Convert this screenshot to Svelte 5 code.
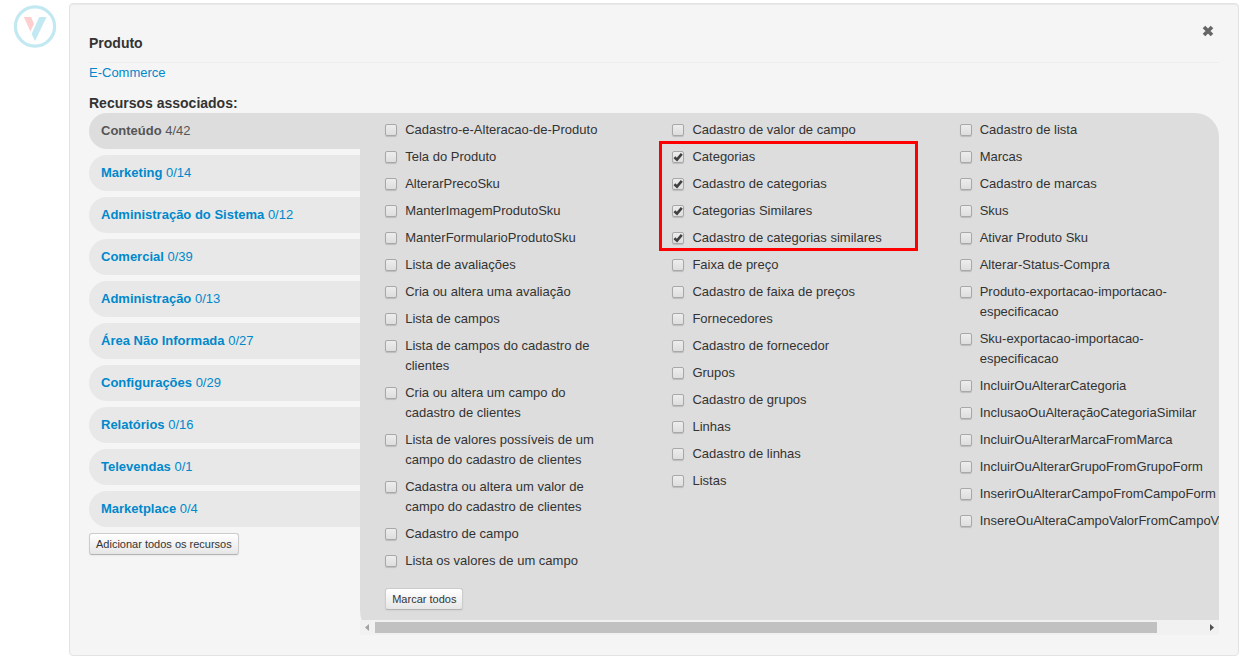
<script>
  const tabs = [
    ['Conteúdo', '4/42'],
    ['Marketing', '0/14'],
    ['Administração do Sistema', '0/12'],
    ['Comercial', '0/39'],
    ['Administração', '0/13'],
    ['Área Não Informada', '0/27'],
    ['Configurações', '0/29'],
    ['Relatórios', '0/16'],
    ['Televendas', '0/1'],
    ['Marketplace', '0/4'],
  ];

  // Each column is a list of groups, so that a run of resources can be outlined together.
  let columns = $state([
    [
      {
        items: [
          'Cadastro-e-Alteracao-de-Produto',
          'Tela do Produto',
          'AlterarPrecoSku',
          'ManterImagemProdutoSku',
          'ManterFormularioProdutoSku',
          'Lista de avaliações',
          'Cria ou altera uma avaliação',
          'Lista de campos',
          'Lista de campos do cadastro de clientes',
          'Cria ou altera um campo do cadastro de clientes',
          'Lista de valores possíveis de um campo do cadastro de clientes',
          'Cadastra ou altera um valor de campo do cadastro de clientes',
          'Cadastro de campo',
          'Lista os valores de um campo',
        ].map((name) => ({ name, checked: false })),
      },
    ],
    [
      { items: [{ name: 'Cadastro de valor de campo', checked: false }] },
      {
        marked: true,
        items: [
          'Categorias',
          'Cadastro de categorias',
          'Categorias Similares',
          'Cadastro de categorias similares',
        ].map((name) => ({ name, checked: true })),
      },
      {
        items: [
          'Faixa de preço',
          'Cadastro de faixa de preços',
          'Fornecedores',
          'Cadastro de fornecedor',
          'Grupos',
          'Cadastro de grupos',
          'Linhas',
          'Cadastro de linhas',
          'Listas',
        ].map((name) => ({ name, checked: false })),
      },
    ],
    [
      {
        items: [
          'Cadastro de lista',
          'Marcas',
          'Cadastro de marcas',
          'Skus',
          'Ativar Produto Sku',
          'Alterar-Status-Compra',
          'Produto-exportacao-importacao-especificacao',
          'Sku-exportacao-importacao-especificacao',
          'IncluirOuAlterarCategoria',
          'InclusaoOuAlteraçãoCategoriaSimilar',
          'IncluirOuAlterarMarcaFromMarca',
          'IncluirOuAlterarGrupoFromGrupoForm',
          'InserirOuAlterarCampoFromCampoForm',
          'InsereOuAlteraCampoValorFromCampoValorForm',
        ].map((name) => ({ name, checked: false })),
      },
    ],
  ]);

  let scroller;

  function scroll(step) {
    scroller.scrollLeft += step;
  }

  function checkAll() {
    for (const column of columns)
      for (const group of column)
        for (const item of group.items) item.checked = true;
  }
</script>

<div class="page">
  <svg class="logo" viewBox="0 0 44 44" aria-hidden="true">
    <circle cx="22" cy="21.5" r="19.6" fill="none" stroke="#c2e9f2" stroke-width="3.2" />
    <path d="M10.8 12h7.4l2.8 7-3.6 7.4z" fill="#ffcfcf" />
    <path d="M26.2 12h7.4L22 36l-3.4-7z" fill="#c2e9f2" />
  </svg>

  <main class="card">
    <header>
      <h1>Produto</h1>
      <button class="close" aria-label="Fechar">
        <svg viewBox="0 0 12 12" aria-hidden="true">
          <path d="M2 2l8 8M10 2l-8 8" stroke="#666" stroke-width="3.6" />
        </svg>
      </button>
    </header>

    <a class="crumb" href="#ecommerce">E-Commerce</a>
    <h2>Recursos associados:</h2>

    <div class="resources">
      <div class="side">
        <nav>
          {#each tabs as [name, count], i}
            <a href="#tab{i}" class:active={i === 0}><strong>{name}</strong> {count}</a>
          {/each}
        </nav>
        <button class="btn">Adicionar todos os recursos</button>
      </div>

      <section class="panel">
        <div class="scroller" bind:this={scroller}>
          <div class="columns">
            {#each columns as column}
              <div class="column">
                {#each column as group}
                  <div class="group" class:marked={group.marked}>
                    {#each group.items as item}
                      <label>
                        <input type="checkbox" bind:checked={item.checked} />
                        <span>{item.name}</span>
                      </label>
                    {/each}
                  </div>
                {/each}
              </div>
            {/each}
          </div>
          <button class="btn" onclick={checkAll}>Marcar todos</button>
        </div>
        <div class="scrollbar">
          <button aria-label="Rolar para a esquerda" onclick={() => scroll(-40)}>
            <svg viewBox="0 0 15 15"><path d="M9 4v7L5 7.5z" fill="#a3a3a3" /></svg>
          </button>
          <div class="track"><div class="thumb"></div></div>
          <button aria-label="Rolar para a direita" onclick={() => scroll(40)}>
            <svg viewBox="0 0 15 15"><path d="M6 4v7l4-3.5z" fill="#505050" /></svg>
          </button>
        </div>
      </section>
    </div>
  </main>
</div>

<style>
  :global(body) {
    background: #fff;
    color: #333;
    font: 13px/20px "Liberation Sans", Arial, sans-serif;
  }

  .page {
    display: flex;
    align-items: flex-start;
    gap: 12px;
    padding: 3px 13px 10px;
  }

  .logo {
    flex: none;
    width: 44px;
    height: 44px;
    margin-top: 2px;
  }

  .card {
    flex: 1;
    min-width: 0;
    padding: 19px;
    padding-bottom: 20px;
    border: 1px solid #e3e3e3;
    border-radius: 4px;
    background: #f5f5f5;
    box-shadow: inset 0 1px 1px rgba(0, 0, 0, 0.05);
  }

  header {
    display: flex;
    justify-content: space-between;
    align-items: flex-start;
    border-bottom: 1px solid #eee;
  }

  h1,
  h2 {
    margin: 0;
    font-size: 14px;
    line-height: 20px;
  }

  h1 {
    padding: 10px 0 9px;
  }

  h2 {
    margin-top: 10px;
  }

  a {
    color: #08c;
    text-decoration: none;
  }

  .crumb {
    display: block;
  }

  .close {
    display: flex;
    margin: 2px 5px 0 0;
    padding: 0;
    border: 0;
    background: none;
  }

  .close svg {
    width: 12px;
    height: 12px;
  }

  .resources {
    display: flex;
  }

  .side {
    flex: 0 0 24%;
    min-width: 0;
  }

  nav {
    display: flex;
    flex-direction: column;
    gap: 6px;
    margin-bottom: 6px;
  }

  nav a {
    padding: 8px 12px;
    border-radius: 18px 0 0 18px;
    background: #e8e8e8;
  }

  nav a.active {
    background: #ddd;
    color: #555;
  }

  .btn {
    padding: 0 6px;
    border: 1px solid #ccc;
    border-bottom-color: #b3b3b3;
    border-radius: 3px;
    background: linear-gradient(#fff, #e6e6e6);
    box-shadow: 0 1px 2px rgba(0, 0, 0, 0.05);
    color: #333;
    font: 11px/20px "Liberation Sans", Arial, sans-serif;
  }

  .panel {
    flex: 1;
    min-width: 0;
    border-radius: 0 24px 0 24px;
    background: #ddd;
  }

  .scroller {
    overflow: hidden;
    padding: 7px 0 10px 25px;
  }

  .columns {
    display: grid;
    grid-template-columns: repeat(3, 34.45%);
    margin-bottom: 10px;
  }

  .group {
    position: relative;
    width: 220px;
  }

  .marked::after {
    content: "";
    position: absolute;
    inset: -6px -26px 4px -13px;
    border: 3px solid #f00;
    pointer-events: none;
  }

  label {
    display: flex;
    align-items: flex-start;
    gap: 8px;
    padding-bottom: 7px;
  }

  input {
    appearance: none;
    flex: none;
    width: 12px;
    height: 12px;
    margin: 4px 0 0;
    border: 1px solid #a8a8a8;
    border-radius: 2px;
    background: linear-gradient(#ededed, #dedede);
    box-shadow: 0 1px 1px rgba(0, 0, 0, 0.15);
  }

  input:checked {
    background:
      url("data:image/svg+xml,%3Csvg xmlns='http://www.w3.org/2000/svg' viewBox='0 0 10 10'%3E%3Cpath d='M1.4 5.2L4 7.6L8.8 1.8' fill='none' stroke='%23404040' stroke-width='2.6'/%3E%3C/svg%3E"),
      linear-gradient(#ededed, #dedede);
  }

  .scrollbar {
    display: flex;
    height: 15px;
    background: #f1f1f1;
  }

  .scrollbar button {
    flex: none;
    width: 15px;
    height: 15px;
    padding: 0;
    border: 0;
    background: none;
  }

  .scrollbar svg {
    display: block;
  }

  .track {
    flex: 1;
    padding: 2px 0;
  }

  .thumb {
    width: 94.3%;
    height: 11px;
    background: #c1c1c1;
  }
</style>
